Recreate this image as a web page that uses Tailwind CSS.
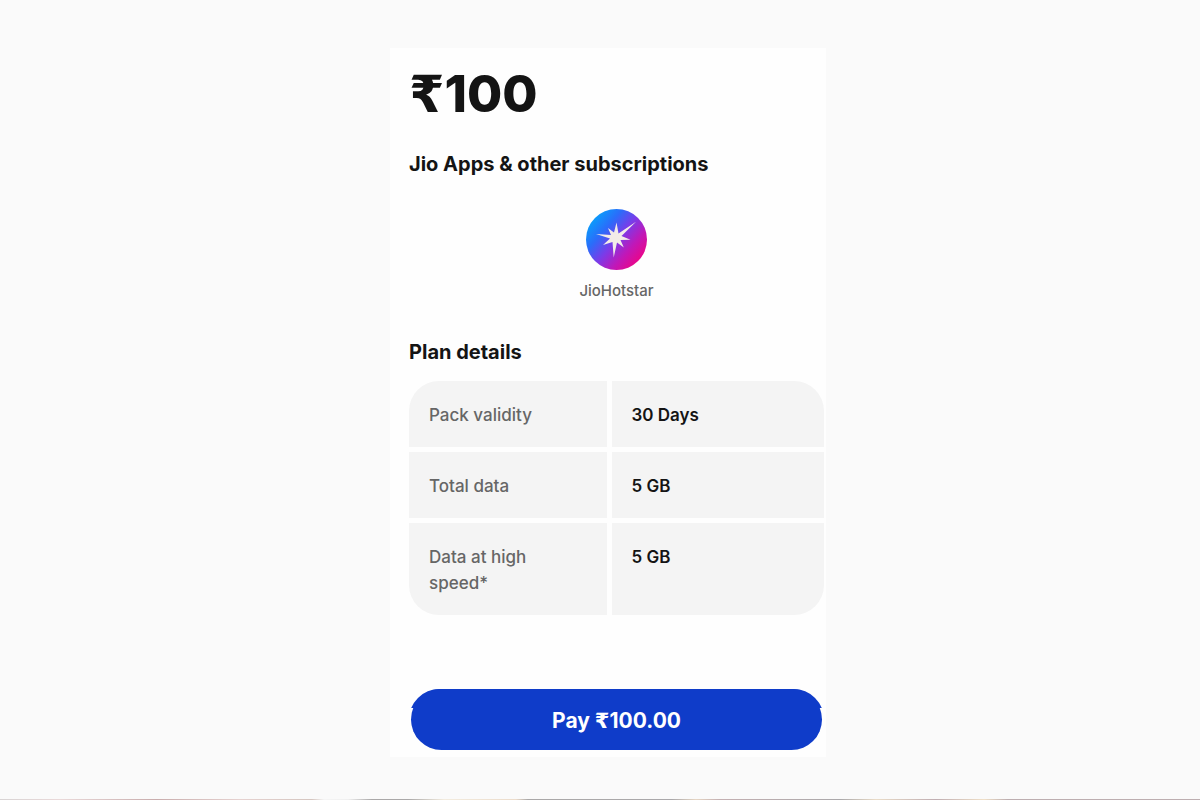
<!DOCTYPE html>
<html lang="en">
<head>
  <meta charset="UTF-8" />
  <meta name="viewport" content="width=device-width, initial-scale=1.0" />
  <title>Jio plan details</title>
  <script src="https://cdn.jsdelivr.net/npm/@tailwindcss/browser@4"></script>
</head>
<body class="min-h-screen flex flex-col bg-[#fafafa] font-['Inter',sans-serif] text-[#141414]">
  <main class="grow flex flex-col items-center pt-12 pl-4">
    <section class="w-full max-w-[436px] bg-[#fefefe] pt-4 pb-[7px] pl-[19px] pr-0.5">
      <h1 class="text-[51px] leading-[60px] font-extrabold"><span class="font-['DejaVu_Sans',sans-serif] leading-none">₹</span>100</h1>

      <h2 class="mt-[26px] text-xl leading-7 font-bold">Jio Apps &amp; other subscriptions</h2>
      <div class="mt-[31px] flex flex-col items-center">
        <svg class="size-[61px]" viewBox="0 0 61 61" aria-hidden="true">
          <defs>
            <linearGradient id="hotstar" x1="0.1" y1="0.18" x2="0.88" y2="0.86">
              <stop offset="0" stop-color="#0a9dfb" />
              <stop offset="0.25" stop-color="#2b6cfa" />
              <stop offset="0.5" stop-color="#7b3be8" />
              <stop offset="0.75" stop-color="#c018b8" />
              <stop offset="1" stop-color="#ec0587" />
            </linearGradient>
          </defs>
          <circle cx="30.5" cy="30.5" r="30.5" fill="url(#hotstar)" />
          <path fill="#f3ece8" d="M50 12.800 L35.500 27 L44.500 30.800 L34.500 31 L37.800 38.500 L31 33.500 L27.700 48.500 L26.500 33 L17 36 L24 29.500 L10 25 L25 26 L22 19 L28 23.500 L30.500 13.500 L32.500 24.500 Z" />
        </svg>
        <p class="mt-[9px] text-[15px] leading-6 font-medium text-[#666666]">JioHotstar</p>
      </div>

      <h2 class="mt-[35px] text-xl leading-7 font-bold">Plan details</h2>
      <div class="mt-[15px] rounded-[30px] overflow-hidden bg-[#f4f4f4]">
        <table class="w-full table-fixed border-collapse text-[17px] leading-[26px] text-left">
          <tbody>
            <tr class="border-b-[5px] border-[#fefefe]">
              <th scope="row" class="w-[200px] border-r-[5px] border-[#fefefe] pt-[21px] pb-[19px] pl-5 pr-12 align-top font-medium text-[#666666]">Pack validity</th>
              <td class="pt-[21px] pb-[19px] px-5 align-top font-semibold">30 Days</td>
            </tr>
            <tr class="border-b-[5px] border-[#fefefe]">
              <th scope="row" class="border-r-[5px] border-[#fefefe] pt-[21px] pb-[19px] pl-5 pr-12 align-top font-medium text-[#666666]">Total data</th>
              <td class="pt-[21px] pb-[19px] px-5 align-top font-semibold">5 GB</td>
            </tr>
            <tr>
              <th scope="row" class="border-r-[5px] border-[#fefefe] pt-[21px] pb-[19px] pl-5 pr-12 align-top font-medium text-[#666666]">Data at high speed*</th>
              <td class="pt-[21px] pb-[19px] px-5 align-top font-semibold">5 GB</td>
            </tr>
          </tbody>
        </table>
      </div>

      <div class="mt-[74px] px-0.5">
        <button type="button" class="relative isolate block w-full rounded-full bg-[#0f3cc9] pt-[17px] pb-[15px] text-[21px] leading-[29px] font-bold text-white before:absolute before:-z-10 before:inset-y-0 before:-inset-x-0.5 before:rounded-full before:bg-[#0f3cc9] before:[clip-path:inset(0_0_42px_0)]">Pay <span class="font-['DejaVu_Sans',sans-serif] leading-none">₹</span>100.00</button>
      </div>
    </section>
  </main>
  <div class="h-px bg-[linear-gradient(to_right,#d8d4d4,#ead9d9_5%,#c9adad_13%,#e6d2d0_20%,#d5c6c0_26%,#f5f5f5_27%,#f0f0f0_29%,#aaa8a8_31%,#aaa8a8_34%,#f3ecdf_37%,#ecdccb_43%,#aaa8a8_44%,#aaa8aa_56%,#e6d6c4_58%,#c4b0b2_60%,#aaa8aa_70%,#eadcc8_73%,#c0aeb2_78%,#f0e0c8_82%,#bdaeb0_84%,#bdaeb0)]"></div>
</body>
</html>
